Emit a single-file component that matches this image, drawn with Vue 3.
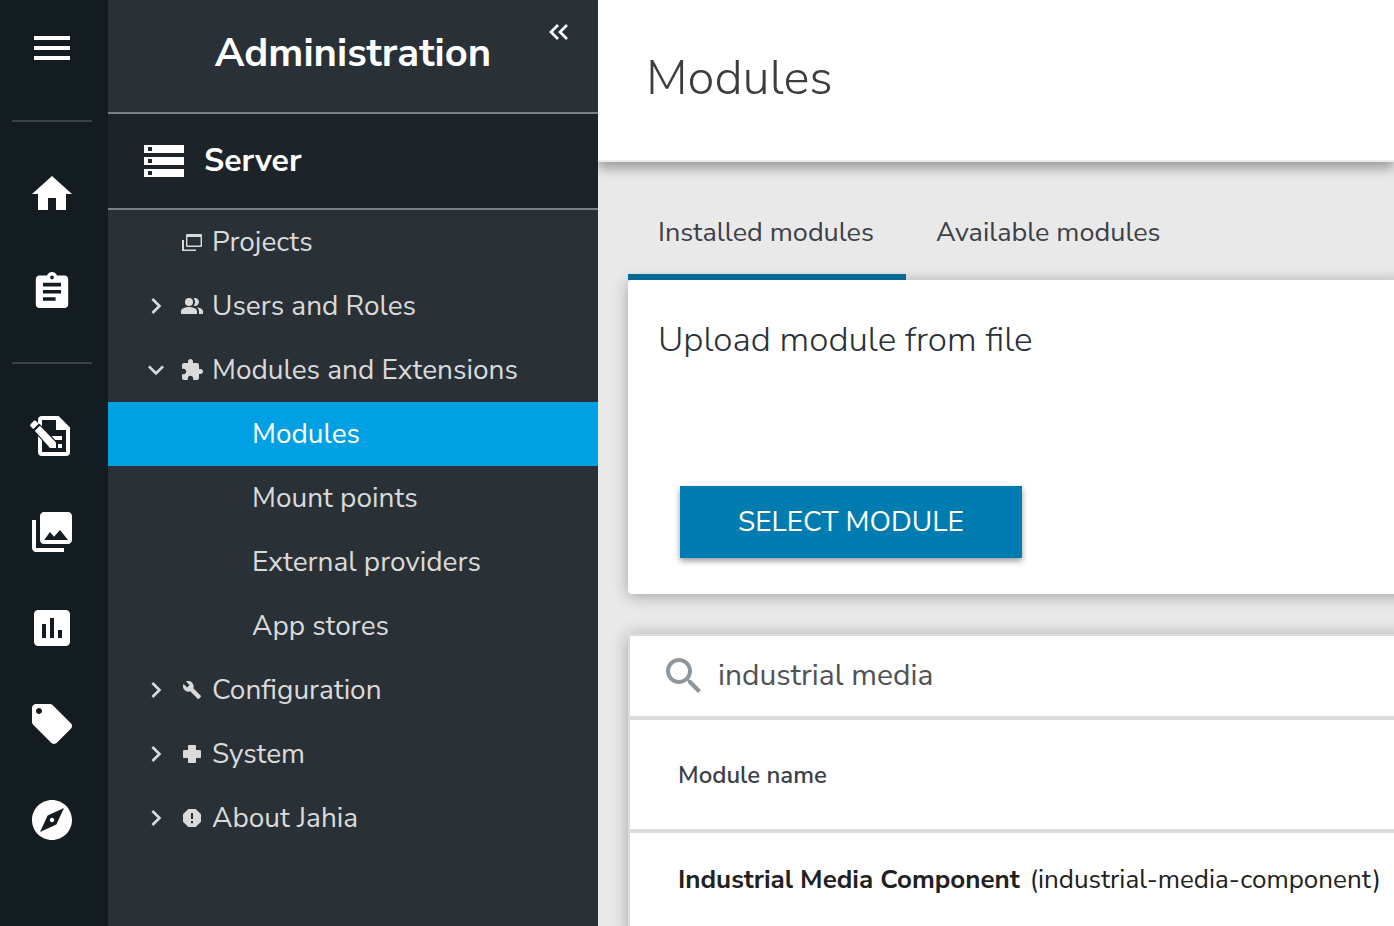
<script setup>
import { ref } from 'vue'

const query = ref('industrial media')

const mainNav = [
  {
    label: 'Home',
    d: 'M10 20v-6h4v6h5v-8h3L12 3 2 12h3v8z'
  },
  {
    label: 'Workflow dashboard',
    transform: 'translate(1.2 2.1) scale(0.9)',
    d: 'M19 3h-4.18C14.4 1.84 13.3 1 12 1c-1.3 0-2.4.84-2.82 2H5c-1.1 0-2 .9-2 2v14c0 1.1.9 2 2 2h14c1.1 0 2-.9 2-2V5c0-1.1-.9-2-2-2zm-7 0c.55 0 1 .45 1 1s-.45 1-1 1-1-.45-1-1 .45-1 1-1zm2 14H7v-2h7v2zm3-4H7v-2h10v2zm0-4H7V7h10v2z'
  }
]

const appNav = [
  {
    label: 'Page Composer',
    d: 'M7 2H15.3L21 7.7V20a2 2 0 0 1-2 2H7a2 2 0 0 1-2-2V4a2 2 0 0 1 2-2zM7 4V20H19V9H14V4zM12 12H17V14H12zM15 16H17V18H15z',
    pencil: true
  },
  {
    label: 'Media',
    d: 'M22 16V4c0-1.1-.9-2-2-2H8c-1.1 0-2 .9-2 2v12c0 1.1.9 2 2 2h12c1.1 0 2-.9 2-2zM8.1 16L11 12l2 2.4L16 11l4 5zM2 6v14c0 1.1.9 2 2 2h14v-2H4V6z'
  },
  {
    label: 'Reports',
    d: 'M19 3H5c-1.1 0-2 .9-2 2v14c0 1.1.9 2 2 2h14c1.1 0 2-.9 2-2V5c0-1.1-.9-2-2-2zM9 17H7v-7h2v7zm4 0h-2V7h2v10zm4 0h-2v-4h2v4z'
  },
  {
    label: 'Tags',
    d: 'M21.41 11.58l-9-9C12.05 2.22 11.55 2 11 2H4c-1.1 0-2 .9-2 2v7c0 .55.22 1.05.59 1.42l9 9c.36.36.86.58 1.41.58.55 0 1.05-.22 1.41-.59l7-7c.37-.36.59-.86.59-1.41 0-.55-.23-1.06-.59-1.42zM5.5 7C4.67 7 4 6.33 4 5.5S4.67 4 5.5 4 7 4.67 7 5.5 6.33 7 5.5 7z'
  },
  {
    label: 'Explore',
    d: 'M12 10.9c-.61 0-1.1.49-1.1 1.1s.49 1.1 1.1 1.1c.61 0 1.1-.49 1.1-1.1s-.49-1.1-1.1-1.1zM12 2C6.48 2 2 6.48 2 12s4.48 10 10 10 10-4.48 10-10S17.52 2 12 2zm2.19 12.19L6 18l3.81-8.19L18 6l-3.81 8.19z'
  }
]

const chevronRight = 'M8.59 16.59L13.17 12 8.59 7.41 10 6l6 6-6 6z'
const chevronDown = 'M7.41 8.59L12 13.17l4.59-4.58L18 10l-6 6-6-6z'

const tree = [
  {
    label: 'Projects',
    d: 'M2 10H4V19.5H16V21H2zM7 4H21a1 1 0 0 1 1 1V16a1 1 0 0 1-1 1H7a1 1 0 0 1-1-1V5a1 1 0 0 1 1-1zM7.4 7V15.6H20.6V7z'
  },
  {
    label: 'Users and Roles',
    toggle: chevronRight,
    d: 'M16.67 13.13C18.04 14.06 19 15.32 19 17v3h4v-3c0-2.18-3.57-3.47-6.33-3.87zM5 8a4 4 0 1 0 8 0a4 4 0 1 0-8 0M15 12c2.21 0 4-1.79 4-4s-1.79-4-4-4c-.47 0-.91.1-1.33.24C14.5 5.27 15 6.58 15 8s-.5 2.73-1.33 3.76c.42.14.86.24 1.33.24zM9 13c-2.67 0-8 1.34-8 4v3h16v-3c0-2.66-5.33-4-8-4z'
  },
  {
    label: 'Modules and Extensions',
    toggle: chevronDown,
    d: 'M20.5 11H19V7c0-1.1-.9-2-2-2h-4V3.5C13 2.12 11.88 1 10.5 1S8 2.12 8 3.5V5H4c-1.1 0-1.99.9-1.99 2v3.8H3.5c1.49 0 2.7 1.21 2.7 2.7s-1.21 2.7-2.7 2.7H2V20c0 1.1.9 2 2 2h3.8v-1.5c0-1.49 1.21-2.7 2.7-2.7 1.49 0 2.7 1.21 2.7 2.7V22H17c1.1 0 2-.9 2-2v-4h1.5c1.38 0 2.5-1.12 2.5-2.5S21.88 11 20.5 11z'
  },
  { label: 'Modules', child: true, active: true },
  { label: 'Mount points', child: true },
  { label: 'External providers', child: true },
  { label: 'App stores', child: true },
  {
    label: 'Configuration',
    toggle: chevronRight,
    transform: 'translate(2.2 2.2) scale(0.82)',
    d: 'M22.7 19l-9.1-9.1c.9-2.3.4-5-1.5-6.9-2-2-5-2.4-7.4-1.3L9 6 6 9 1.6 4.7C.4 7.1.9 10.1 2.9 12.1c1.9 1.9 4.6 2.4 6.9 1.5l9.1 9.1c.4.4 1 .4 1.4 0l2.3-2.3c.5-.4.5-1.1.1-1.4z'
  },
  {
    label: 'System',
    toggle: chevronRight,
    d: 'M9 3H15a1 1 0 0 1 1 1V8H20a1 1 0 0 1 1 1V15a1 1 0 0 1-1 1H16V20a1 1 0 0 1-1 1H9a1 1 0 0 1-1-1V16H4a1 1 0 0 1-1-1V9a1 1 0 0 1 1-1H8V4a1 1 0 0 1 1-1z'
  },
  {
    label: 'About Jahia',
    toggle: chevronRight,
    d: 'M8.3 3H15.7L21 8.3V15.7L15.7 21H8.3L3 15.7V8.3zM11 7V13H13V7zM11 15V17.2H13V15z'
  }
]
</script>

<template>
  <div class="app">
    <nav class="rail" aria-label="Main navigation">
      <button class="rail-item" type="button" aria-label="Menu">
        <svg class="icon" viewBox="0 0 24 24"><path d="M3 18h18v-2H3v2zm0-5h18v-2H3v2zm0-7v2h18V6H3z" /></svg>
      </button>
      <hr class="rail-line" />
      <button v-for="item in mainNav" :key="item.label" class="rail-item" type="button" :aria-label="item.label">
        <svg class="icon" viewBox="0 0 24 24"><path :d="item.d" :transform="item.transform" /></svg>
      </button>
      <hr class="rail-line" />
      <button v-for="item in appNav" :key="item.label" class="rail-item" type="button" :aria-label="item.label">
        <svg class="icon" viewBox="0 0 24 24">
          <path :d="item.d" fill-rule="evenodd" />
          <g v-if="item.pencil">
            <path class="cut" d="M3.4 9.3L5.9 6.9L14 15.2V18H11.1zM1.3 6.9L3.5 4.7L5.5 6.7L3.2 8.9z" />
            <path d="M3.4 9.4L6 6.9L14 15.2V18H11z" />
            <path d="M1.3 6.1L2.8 4.5Q3.4 3.9 4 4.5L5.4 5.9L2.7 8.5L1.3 7.2Q.8 6.6 1.3 6.1z" />
          </g>
        </svg>
      </button>
    </nav>

    <aside class="panel">
      <header class="panel-head">
        <h1 class="panel-title">Administration</h1>
        <button class="collapse" type="button" aria-label="Collapse panel">
          <svg viewBox="0 0 20 16"><path d="M9 1L2 8l7 7M18 1L11 8l7 7" /></svg>
        </button>
      </header>
      <h2 class="section">
        <svg class="icon" viewBox="0 0 24 24"><path d="M2 20h20v-4H2v4zm2-3h2v2H4v-2zM2 4v4h20V4H2zm4 3H4V5h2v2zm-4 7h20v-4H2v4zm2-3h2v2H4v-2z" /></svg>
        <span>Server</span>
      </h2>
      <ul class="tree">
        <li v-for="node in tree" :key="node.label + (node.child ? '-child' : '')">
          <a href="#" class="node" :class="{ child: node.child, active: node.active }">
            <template v-if="!node.child">
              <span class="toggle">
                <svg v-if="node.toggle" viewBox="0 0 24 24"><path :d="node.toggle" /></svg>
              </span>
              <svg class="node-icon" viewBox="0 0 24 24"><path :d="node.d" :transform="node.transform" fill-rule="evenodd" /></svg>
            </template>
            <span>{{ node.label }}</span>
          </a>
        </li>
      </ul>
    </aside>

    <main class="main">
      <header class="page-head">
        <h1 class="page-title">Modules</h1>
      </header>
      <div class="content">
        <div class="tabs" role="tablist">
          <button class="tab selected" type="button" role="tab" aria-selected="true">Installed modules</button>
          <button class="tab" type="button" role="tab" aria-selected="false">Available modules</button>
        </div>
        <section class="card upload">
          <h2 class="upload-title">Upload module from file</h2>
          <button class="select-module" type="button">SELECT MODULE</button>
        </section>
        <section class="card list">
          <div class="search">
            <label for="module-search" aria-label="Search modules">
              <svg class="icon" viewBox="0 0 24 24"><path d="M15.5 14h-.79l-.28-.27C15.41 12.59 16 11.11 16 9.5 16 5.91 13.09 3 9.5 3S3 5.91 3 9.5 5.91 16 9.5 16c1.61 0 3.09-.59 4.23-1.57l.27.28v.79l5 4.99L20.49 19l-4.99-5zm-6 0C7.01 14 5 11.99 5 9.5S7.01 5 9.5 5 14 7.01 14 9.5 11.99 14 9.5 14z" /></svg>
            </label>
            <input id="module-search" v-model="query" type="text" />
          </div>
          <table class="modules">
            <thead>
              <tr><th scope="col">Module name</th></tr>
            </thead>
            <tbody>
              <tr><td><strong>Industrial Media Component</strong><span>(industrial-media-component)</span></td></tr>
            </tbody>
          </table>
        </section>
      </div>
    </main>
  </div>
</template>

<style>
body {
  margin: 0;
}
</style>

<style scoped>
.app {
  display: flex;
  height: 100vh;
  overflow: hidden;
  font-family: "Nunito Sans", Nunito, Lato, "Open Sans", sans-serif;
  font-size: 28px;
  line-height: 40px;
}

h1,
h2,
ul {
  margin: 0;
  padding: 0;
}

button {
  border: 0;
  padding: 0;
  background: none;
  font: inherit;
  color: inherit;
  cursor: pointer;
}

.icon {
  display: block;
  width: 48px;
  height: 48px;
  fill: currentColor;
}

.rail {
  display: flex;
  flex: none;
  flex-direction: column;
  width: 104px;
  padding-right: 4px;
  background: #131c21;
  color: #fff;
}

.rail-item {
  display: flex;
  flex: none;
  align-items: center;
  justify-content: center;
  height: 96px;
}

.rail-line {
  flex: none;
  width: 80px;
  height: 2px;
  margin: 24px auto;
  border: 0;
  background: #3b4247;
}

.cut {
  fill: #131c21;
  stroke: #131c21;
  stroke-width: 1.2;
}

.panel {
  flex: none;
  width: 490px;
  background: #293136;
  color: #fff;
}

.panel-head {
  position: relative;
  padding: 28px 0 34px;
  border-bottom: 2px solid #7b8087;
}

.panel-title {
  font-size: 40px;
  font-weight: 700;
  line-height: 50px;
  text-align: center;
}

.collapse {
  position: absolute;
  top: 16px;
  right: 23px;
  display: grid;
  place-items: center;
  width: 32px;
  height: 32px;
}

.collapse svg {
  width: 20px;
  height: 16px;
  fill: none;
  stroke: currentColor;
  stroke-width: 2.7;
}

.section {
  display: flex;
  align-items: center;
  gap: 16px;
  height: 94px;
  padding-left: 32px;
  border-bottom: 2px solid #7b8087;
  background: #1c2429;
  font-size: 32px;
  font-weight: 700;
}

.tree {
  list-style: none;
}

.node {
  display: flex;
  align-items: center;
  height: 64px;
  padding-left: 32px;
  color: #dadada;
  text-decoration: none;
  white-space: nowrap;
}

.node.child {
  padding-left: 144px;
}

.node.active {
  background: #00a0e3;
  color: #fff;
}

.toggle,
.toggle svg {
  display: block;
  width: 32px;
  height: 32px;
  fill: currentColor;
}

.node-icon {
  width: 24px;
  height: 24px;
  margin: 0 8px;
  fill: currentColor;
}

.main {
  flex: 1;
  min-width: 0;
  overflow: hidden;
  background: #e9e9e9;
  color: #293136;
}

.page-head {
  padding: 46px 48px 50px;
  border-bottom: 2px solid #ececec;
  background: #fff;
  box-shadow: 0 6px 12px rgba(0, 0, 0, 0.35);
}

.page-title {
  font-size: 49px;
  font-weight: 300;
  line-height: 64px;
  color: #3b3d40;
}

.content {
  padding: 24px 0 0 30px;
}

.tabs {
  display: flex;
}

.tab {
  height: 94px;
  padding: 6px 32px 0 30px;
  border-bottom: 6px solid transparent;
  font-size: 27px;
  color: #3b4048;
}

.tab.selected {
  border-bottom-color: #076994;
}

.card {
  margin-right: -16px;
  background: #fff;
  box-shadow: 0 2px 16px rgba(0, 0, 0, 0.3);
}

.upload {
  padding: 36px 30px;
  border-radius: 4px;
}

.upload-title {
  margin-bottom: 122px;
  font-size: 35px;
  font-weight: 300;
  line-height: 48px;
}

.select-module {
  display: block;
  height: 72px;
  margin-left: 22px;
  padding: 0 58px;
  background: #007cb0;
  color: #fff;
  box-shadow: 0 3px 6px rgba(0, 0, 0, 0.4);
}

.list {
  margin-top: 40px;
  border: 2px solid #dcdcdc;
}

.search {
  display: flex;
  align-items: center;
  gap: 10px;
  height: 80px;
  padding-left: 30px;
  border-bottom: 4px solid #dcdcdc;
  color: #8f979e;
}

.search input {
  flex: 1;
  min-width: 0;
  padding: 0;
  border: 0;
  outline: 0;
  background: none;
  font: inherit;
  font-size: 30px;
  color: #505356;
}

.modules {
  width: 100%;
  border-spacing: 0;
  text-align: left;
  white-space: nowrap;
}

.modules th {
  height: 109px;
  padding: 0 48px;
  border-bottom: 4px solid #dcdcdc;
  font-size: 24px;
  font-weight: 600;
  color: #3b4048;
}

.modules td {
  height: 94px;
  padding: 0 0 0 48px;
  border-bottom: 4px solid #dcdcdc;
  font-size: 26px;
  color: #212121;
}

.modules strong {
  margin-right: 10px;
}
</style>
